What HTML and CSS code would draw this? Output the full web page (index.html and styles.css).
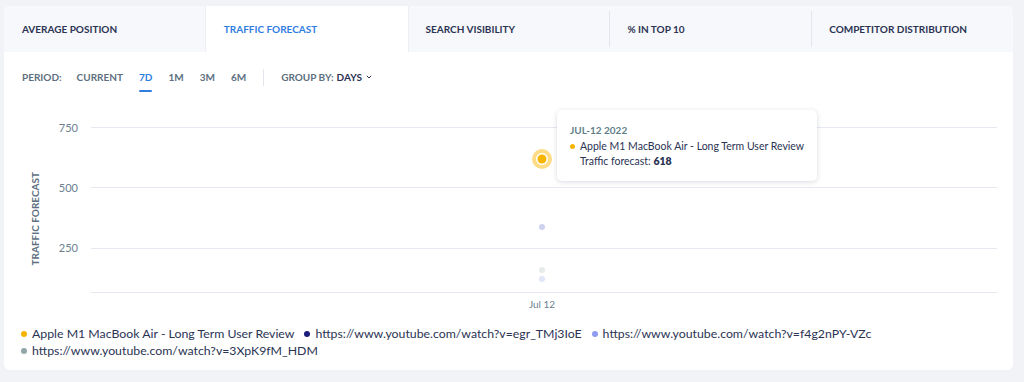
FILE: index.html
```html
<!DOCTYPE html>
<html lang="en">
<head>
    <meta charset="UTF-8">
    <meta name="viewport" content="width=device-width, initial-scale=1.0">
    <title>Traffic Forecast</title>
    <link rel="stylesheet" href="styles.css">
</head>
<body>

    <div class="card">
        <!-- Tabs -->
        <div class="tabs">
            <div class="tab">Average Position</div>
            <div class="tab active">Traffic Forecast</div>
            <div class="tab">Search Visibility</div>
            <div class="tab">% in Top 10</div>
            <div class="tab">Competitor Distribution</div>
        </div>

        <!-- Period / group toolbar -->
        <div class="toolbar">
            <span class="label">Period:</span>
            <span class="period">Current</span>
            <span class="period selected">7D</span>
            <span class="period">1M</span>
            <span class="period">3M</span>
            <span class="period">6M</span>
            <span class="divider"></span>
            <span class="label">Group by:</span>
            <span class="value">Days</span>
            <svg class="chevron" width="6" height="4" viewBox="0 0 6 4"><path d="M0.8 0.8 L3 3 L5.2 0.8" fill="none" stroke="#2b3354" stroke-width="1"/></svg>
        </div>

        <!-- Chart -->
        <div class="chart">
            <div class="y-title"><span>Traffic Forecast</span></div>
            <svg class="plot" width="947" height="215" viewBox="0 0 947 215">
                <g stroke="#e7e9f1" stroke-width="1">
                    <line x1="25" y1="25.5" x2="931" y2="25.5"/>
                    <line x1="25" y1="85.5" x2="931" y2="85.5"/>
                    <line x1="25" y1="146.5" x2="931" y2="146.5"/>
                    <line x1="25" y1="190.5" x2="931" y2="190.5"/>
                </g>
                <g class="tick">
                    <text x="12" y="30" text-anchor="end">750</text>
                    <text x="12" y="90" text-anchor="end">500</text>
                    <text x="12" y="150" text-anchor="end">250</text>
                    <text x="476" y="206" text-anchor="middle" class="x-tick">Jul 12</text>
                </g>
                <circle cx="476" cy="125" r="3" fill="#cfd2ee"/>
                <circle cx="476" cy="168" r="3" fill="#e7ebec"/>
                <circle cx="476" cy="177" r="3" fill="#e1e6f8"/>
                <circle cx="476" cy="57" r="10" fill="#fddc85"/>
                <circle cx="476" cy="57" r="6" fill="#ffffff"/>
                <circle cx="476" cy="57" r="4.5" fill="#f7b500"/>
            </svg>

            <div class="tooltip">
                <div class="tip-date">Jul-12 2022</div>
                <div class="tip-name"><span class="dot yellow"></span>Apple M1 MacBook Air - Long Term User Review</div>
                <div class="tip-value">Traffic forecast: <b>618</b></div>
            </div>
        </div>

        <!-- Legend -->
        <div class="legend">
            <div class="legend-item"><span class="dot yellow"></span>Apple M1 MacBook Air - Long Term User Review</div>
            <div class="legend-item"><span class="dot navy"></span>https://www.youtube.com/watch?v=egr_TMj3IoE</div>
            <div class="legend-item"><span class="dot periwinkle"></span>https://www.youtube.com/watch?v=f4g2nPY-VZc</div>
            <div class="legend-item"><span class="dot slate"></span>https://www.youtube.com/watch?v=3XpK9fM_HDM</div>
        </div>
    </div>

</body>
</html>
```

FILE: styles.css
```css
body {
    font-family: Lato, "Open Sans", sans-serif;
    background-color: #f2f3f7;
    margin: 0;
    padding: 6px 11px 0 4px;
    color: #2b3354;
}
.card {
    background-color: white;
    border-radius: 6px;
    overflow: hidden;
    height: 364px;
}
.tabs {
    display: flex;
    height: 46px;
    background-color: #f7f8fb;
}
.tab {
    flex: 1;
    position: relative;
    display: flex;
    align-items: center;
    padding-left: 18px;
    font-size: 10px;
    font-weight: 700;
    text-transform: uppercase;
    color: #2b3354;
}
.tab + .tab::before {
    content: "";
    position: absolute;
    left: 0;
    top: 5px;
    bottom: 5px;
    width: 1px;
    background-color: #e4e6ed;
}
.tab.active {
    background-color: white;
    color: #2f7ddf;
    box-shadow: -1px 0 0 #eceef3, 1px 0 0 #eceef3;
    z-index: 1;
}
.tab.active::before,
.tab.active + .tab::before {
    display: none;
}
.toolbar {
    display: flex;
    align-items: center;
    height: 50px;
    padding-left: 18px;
    font-size: 10px;
    font-weight: 700;
    text-transform: uppercase;
    color: #5d6f80;
}
.label {
    margin-right: 15px;
}
.period {
    position: relative;
    margin-right: 16px;
}
.period.selected {
    color: #2f7ddf;
}
.period.selected::after {
    content: "";
    position: absolute;
    left: 0;
    right: 0;
    bottom: -9px;
    height: 2px;
    border-radius: 1px;
    background-color: #2f7ddf;
}
.divider {
    width: 1px;
    height: 17px;
    background-color: #e4e6ed;
    margin: 0 17px 0 1px;
}
.toolbar .label + .value {
    margin-left: -12px;
}
.value {
    color: #2b3354;
}
.chevron {
    margin-left: 4px;
}
.chart {
    position: relative;
    display: flex;
    height: 215px;
}
.y-title {
    width: 62px;
    display: flex;
    align-items: center;
    justify-content: center;
    padding-top: 18px;
    box-sizing: border-box;
}
.y-title span {
    writing-mode: vertical-rl;
    transform: rotate(180deg);
    font-size: 10px;
    font-weight: 700;
    text-transform: uppercase;
    color: #5d6f80;
}
.plot {
    overflow: visible;
}
.tick text {
    font-family: Lato, sans-serif;
    font-size: 11px;
    fill: #6a8090;
}
.tick .x-tick {
    font-size: 10px;
}
.tooltip {
    position: absolute;
    left: 553px;
    top: 8px;
    width: 260px;
    height: 71px;
    box-sizing: border-box;
    padding: 13px 0 0 13px;
    background-color: white;
    border-radius: 5px;
    box-shadow: 0 1px 5px rgba(40, 50, 80, 0.18);
    font-size: 10.5px;
    line-height: 15px;
}
.tip-date {
    font-size: 10px;
    font-weight: 700;
    text-transform: uppercase;
    color: #5f7f8a;
    margin-bottom: 1px;
}
.tip-name {
    display: flex;
    align-items: center;
}
.tip-name .dot {
    width: 5px;
    height: 5px;
    margin-right: 5px;
}
.tip-value {
    padding-left: 10px;
}
.tip-value b {
    font-weight: 800;
}
.legend {
    display: flex;
    flex-wrap: wrap;
    padding: 8px 0 0 17px;
    font-size: 12.3px;
    line-height: 17px;
}
.legend-item {
    display: flex;
    align-items: center;
    margin-right: 10px;
}
.dot {
    display: inline-block;
    width: 6px;
    height: 6px;
    border-radius: 50%;
    margin-right: 5px;
}
.yellow { background-color: #f7b500; }
.navy { background-color: #1c1c7c; }
.periwinkle { background-color: #8e9cf2; }
.slate { background-color: #93a6a9; }
```
